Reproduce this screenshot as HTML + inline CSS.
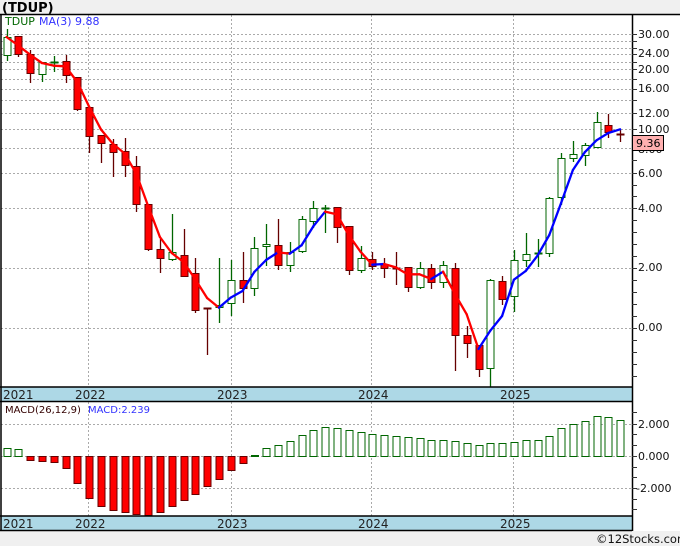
<!DOCTYPE html>
<html><head><meta charset="utf-8"><style>
html,body{margin:0;padding:0;background:#f0f0f0;}
svg{display:block;font-family:"DejaVu Sans","Liberation Sans",sans-serif;}
</style></head><body>
<svg id="s" width="680" height="546" viewBox="0 0 680 546" xmlns="http://www.w3.org/2000/svg">
<rect x="0" y="14" width="680" height="517" fill="#fff"/>
<text x="2" y="12" font-size="13" font-weight="bold" fill="#000">(TDUP)</text>
<g id="g"></g>
</svg>
<script>
var out='';
function L(x1,y1,x2,y2,c,w,d){out+='<line x1="'+x1+'" y1="'+y1+'" x2="'+x2+'" y2="'+y2+'" stroke="'+c+'" stroke-width="'+(w||1)+'"'+(d?' stroke-dasharray="'+d+'"':'')+'/>';}
function R(x,y,w,h,f,s){out+='<rect x="'+x+'" y="'+y+'" width="'+w+'" height="'+h+'" fill="'+f+'"'+(s?' stroke="'+s+'" stroke-width="1"':'')+'/>';}
function T(x,y,t,c,fs){out+='<text x="'+x+'" y="'+y+'" font-size="'+(fs||11)+'" fill="'+c+'">'+t+'</text>';}
var gy=[34,41,48,54,62,69,79,89,100,113,129,148,173,208,268,328];
gy.forEach(function(y){L(1,y+.5,632,y+.5,'#aaa',1,'2,2');});
var vx=[88,231,371,513];
vx.forEach(function(x){L(x+.5,15,x+.5,387,'#aaa',1,'2,2');L(x+.5,402,x+.5,516,'#aaa',1,'2,2');});
[424,456,488].forEach(function(y){L(1,y+.5,632,y+.5,'#aaa',1,'2,2');});
var C=[['g',37,55,29,61],['r',36,54,36,57],['r',54,73,50,83],['g',62,74,62,82],['g',62,63,56,72],['r',61,75,55,83],['r',77,109,77,111],['r',107,136,107,153],['r',135,143,135,163],['r',144,152,139,177],['r',151,165,138,177],
['r',166,204,156,212],['r',204,249,204,251],['r',249,258,239,273],['g',252,259,214,261],['r',255,276,229,277],['r',273,310,258,313],['r',308,308,308,355],['g',305,307,258,323],['g',280,303,260,316],['r',280,288,252,303],['g',248,288,237,296],['g',244,246,224,266],['r',245,265,219,270],['g',252,265,242,272],['g',219,251,216,253],['g',208,221,201,228],['g',208,208,205,233],['r',207,227,207,243],['r',226,270,226,275],
['g',258,270,246,273],['r',259,266,252,270],['r',264,268,258,278],['r',268,268,252,285],['r',267,287,267,292],['g',268,287,262,289],['r',268,282,264,289],['g',265,282,261,288],['r',268,335,263,371],['r',335,343,326,358],['r',345,369,345,377],['g',280,368,279,388],['r',281,299,276,305],['g',260,296,250,312],['g',254,260,233,267],['g',253,253,239,267],['g',198,253,197,257],['g',158,197,153,205],['g',154,158,141,162],['g',145,155,143,166],['g',122,147,112,148],['r',125,132,114,138],['r',134,134,129,142]];
function cx(i){return 6.5+11.8*i;}
var closes=[];
C.forEach(function(c,i){var x=Math.round(cx(i));var col=c[0]=='g'?'#060':'#600';
L(x+.5,c[3],x+.5,c[4],col,1.3);
if(c[2]-c[1]<2){L(x-3.5,c[1]+.5,x+4.5,c[1]+.5,col,2);}
else if(c[0]=='g'){R(x-3,c[1]+.5,7,c[2]-c[1],'#fff','#060');}
else{R(x-3,c[1]+.5,7,c[2]-c[1],'#f00','#600');}
closes.push(c[0]=='g'?c[1]:c[2]);});
var ma=[];for(var i=0;i<closes.length;i++){var a=closes.slice(Math.max(0,i-2),i+1);ma.push(a.reduce(function(p,q){return p+q;},0)/a.length);}
for(var i=1;i<ma.length;i++){var c=ma[i]<ma[i-1]?'#00f':'#f00';out+='<line x1="'+cx(i-1)+'" y1="'+ma[i-1]+'" x2="'+cx(i)+'" y2="'+ma[i]+'" stroke="'+c+'" stroke-width="2.3" stroke-linecap="round"/>';}
var M=[448,449,460,461,462,468,483,498,506,510,512,514,515,512,506,500,494,486,479,470,463,456,448,445,441,435,430,427,428,430,432,434,435,436,437,438,440,440,441,443,445,443,443,442,440,440,436,428,424,421,416,417,420];
M.forEach(function(y,i){var x=Math.round(cx(i));if(y<456){R(x-3,y+.5,7,456-y,'#fff','#060');}else if(y>456){R(x-3,456.5,7,y-456,'#f00','#600');}else{L(x-3,456,x+5,456,'#060',2);}});
R(1,387,631,14,'#add8e6');L(0,387,632,387,'#000',1.5);L(0,401.5,632,401.5,'#000',1.5);
R(1,516,631,14,'#add8e6');L(0,516,632,516,'#000',1.5);L(0,530.5,632,530.5,'#000',1.5);
var yrs=[[3,'2021'],[75,'2022'],[217,'2023'],[358,'2024'],[500,'2025']];
yrs.forEach(function(p){T(p[0],399,p[1],'#222',12);T(p[0],528,p[1],'#222',12);});
L(0,14.5,680,14.5,'#000',1.5);L(1,14,1,531,'#000',1.5);L(632.5,14,632.5,531,'#000',1.5);
var ax=[[34,'30.00'],[53,'24.00'],[69,'20.00'],[88,'16.00'],[113,'12.00'],[129,'10.00'],[149,'8.00'],[173,'6.00'],[208,'4.00'],[267,'2.00'],[327,'0.00']];
gy.concat([160,185,196,220,232,244,256,280,292,304,316,340,352,364,376]).forEach(function(y){L(632,y+.5,637,y+.5,'#333',1);});
ax.forEach(function(a){T(638,a[0]+4,a[1],'#111');});
[412,424,434,445,456,467,477,488,499,509].forEach(function(y){L(632,y+.5,637,y+.5,'#333',1);});
T(638,428,'2.000','#111');T(638,460,'0.000','#111');T(636,492,'-2.000','#111');
R(632.5,135.5,31,15,'#ffb0b0','#000');T(636,147,'9.36','#000');
T(5,25,'TDUP','#060',11);T(39,25,'MA(3)','#33f',11);T(75,25,'9.88','#33f',11);
T(5,413,'MACD(26,12,9)','#300',10);T(88,413,'MACD:2.239','#33f',10);
T(596,543,'©12Stocks.com','#111',11.5);
document.getElementById('g').innerHTML=out;
</script>
</body></html>
